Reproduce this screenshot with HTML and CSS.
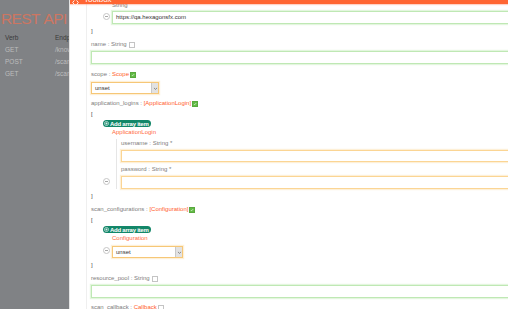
FILE: index.html
```html
<html><head>
	<meta charset="utf-8">
	<title>REST API</title>
	<link rel="stylesheet" href="styles.css">
</head>
<body>
	<!--页面背景-->
	<div class="page">
		<h1 class="title">REST API</h1>
		<div class="verbs">
			<div class="th">Verb</div><div class="th">Endpoint</div>
			<div>GET</div><div>/knowledge</div>
			<div>POST</div><div>/scans</div>
			<div>GET</div><div>/scans/{id}</div>
		</div>
	</div>

	<!--弹出层-->
	<div class="modal">
		<div class="modal-body">
			<div class="form">
				<div class="field">
					<div class="lbl">urls : <span class="t">[String]</span></div>
					<div class="brk">[</div>
					<div class="arr">
						<a href="#" class="add"><svg viewBox="0 0 10 10" width="5" height="5"><circle cx="5" cy="5" r="4.1" fill="none" stroke="#fff" stroke-width="1.2"/><path d="M5 2.7v4.6M2.7 5h4.6" stroke="#fff" stroke-width="1.2"/></svg>Add array item</a>
						<div class="item">
							<span class="rm"></span>
							<div class="item-body">
								<div class="item-title plain">String</div>
								<div class="ctl ok">https://qa.hexagonsfx.com</div>
							</div>
						</div>
					</div>
					<div class="brk">]</div>
				</div>

				<div class="field">
					<div class="lbl">name : String <span class="chk"></span></div>
					<div class="ctl ok"></div>
				</div>

				<div class="field loose">
					<div class="lbl">scope : <span class="t">Scope</span> <span class="chk on"><svg viewBox="0 0 6 6"><path d="M1.2 3l1.2 1.2 2.4-2.6" fill="none" stroke="#fff" stroke-width="0.9"/></svg></span></div>
					<div class="sel sel-scope">unset<span class="arrow"><svg viewBox="0 0 8 8" width="5" height="5"><path d="M1.5 3l2.5 2.4L6.5 3" fill="none" stroke="#555" stroke-width="1"/></svg></span></div>
				</div>

				<div class="field">
					<div class="lbl">application_logins : <span class="t">[ApplicationLogin]</span> <span class="chk on"><svg viewBox="0 0 6 6"><path d="M1.2 3l1.2 1.2 2.4-2.6" fill="none" stroke="#fff" stroke-width="0.9"/></svg></span></div>
					<div class="brk">[</div>
					<div class="arr">
						<a href="#" class="add"><svg viewBox="0 0 10 10" width="5" height="5"><circle cx="5" cy="5" r="4.1" fill="none" stroke="#fff" stroke-width="1.2"/><path d="M5 2.7v4.6M2.7 5h4.6" stroke="#fff" stroke-width="1.2"/></svg>Add array item</a>
						<div class="item">
							<span class="rm"></span>
							<div class="item-body">
								<div class="item-title">ApplicationLogin</div>
								<div class="nest">
									<div class="lbl">username : String *</div>
									<div class="ctl warn short"></div>
									<div class="lbl">password : String *</div>
									<div class="ctl warn"></div>
								</div>
							</div>
						</div>
					</div>
					<div class="brk">]</div>
				</div>

				<div class="field">
					<div class="lbl">scan_configurations : <span class="t">[Configuration]</span> <span class="chk on"><svg viewBox="0 0 6 6"><path d="M1.2 3l1.2 1.2 2.4-2.6" fill="none" stroke="#fff" stroke-width="0.9"/></svg></span></div>
					<div class="brk">[</div>
					<div class="arr">
						<a href="#" class="add"><svg viewBox="0 0 10 10" width="5" height="5"><circle cx="5" cy="5" r="4.1" fill="none" stroke="#fff" stroke-width="1.2"/><path d="M5 2.7v4.6M2.7 5h4.6" stroke="#fff" stroke-width="1.2"/></svg>Add array item</a>
						<div class="item">
							<span class="rm"></span>
							<div class="item-body">
								<div class="item-title">Configuration</div>
								<div class="sel sel-conf">unset<span class="arrow"><svg viewBox="0 0 8 8" width="5" height="5"><path d="M1.5 3l2.5 2.4L6.5 3" fill="none" stroke="#555" stroke-width="1"/></svg></span></div>
							</div>
						</div>
					</div>
					<div class="brk">]</div>
				</div>

				<div class="field">
					<div class="lbl">resource_pool : String <span class="chk"></span></div>
					<div class="ctl ok"></div>
				</div>

				<div class="field">
					<div class="lbl">scan_callback : <span class="t">Callback</span> <span class="chk"></span></div>
				</div>
			</div>
		</div>

		<div class="modal-head">
			<svg viewBox="0 0 10 10" width="7" height="7"><path d="M3.5 2L1 5l2.5 3M6.5 2L9 5 6.5 8" fill="none" stroke="#fff" stroke-width="1.3"/></svg>
			<span>Toolbox</span>
		</div>
	</div>
</body></html>
```

FILE: styles.css
```css
* {
	margin: 0;
	padding: 0;
	box-sizing: border-box;
}

html, body {
	height: 100%;
	overflow: hidden;
}

body {
	font-family: "Liberation Sans", Arial, sans-serif;
	background: #808285;
	position: relative;
}

a {
	text-decoration: none;
}

/* 背景页面 */
.page {
	padding: 9px 0 0 1px;
}

.title {
	font-size: 15.5px;
	font-weight: normal;
	line-height: 20px;
	letter-spacing: -0.6px;
	word-spacing: 1px;
	color: #cd7662;
}

.verbs {
	display: grid;
	grid-template-columns: 50px auto;
	margin-top: 3px;
	padding-left: 4px;
	font-size: 6.5px;
	line-height: 12px;
	color: #bdbdbd;
}
.verbs .th {
	color: #3a3a3a;
}

/* 弹出层 */
.modal {
	position: absolute;
	top: 0;
	bottom: 0;
	left: 69px;
	width: 620px;
	background: #fff;
	border-left: 1px solid #e4e4e4;
	overflow: hidden;
}

.modal-head {
	position: absolute;
	top: -18px;
	left: 0;
	right: 0;
	height: 22px;
	display: flex;
	align-items: flex-end;
	gap: 5px;
	padding-left: 2px;
	background: #ff6633;
	box-shadow: 0 1px 1px rgba(255, 110, 70, 0.3);
	color: #fff;
	font-size: 8px;
	line-height: 8px;
}
.modal-head svg {
	margin-bottom: -2px;
}

.modal-body {
	margin-top: -33px;
	padding-left: 16px;
}

.form {
	border-left: 1px solid #efefef;
	padding-left: 4px;
	min-height: 400px;
	font-size: 6px;
	color: #7d7d7d;
}

.field {
	margin-top: 5px;
}
.field.loose {
	margin-top: 6px;
}

.lbl {
	display: flex;
	align-items: center;
	height: 9px;
	line-height: 9px;
	white-space: pre;
}

.t {
	color: #ff5e2b;
}

.chk {
	display: inline-block;
	width: 6px;
	height: 6px;
	margin-left: 1px;
	border: 1px solid #c4c4c4;
	background: #fff;
}
.chk.on {
	border-color: #5aa83e;
	background: #62bb46;
}
.chk svg {
	display: block;
	width: 4px;
	height: 4px;
}

.brk {
	height: 8px;
	line-height: 8px;
	color: #444;
}
.lbl + .brk {
	margin-top: 2px;
}
.arr + .brk {
	margin-top: 3px;
}

/* 输入框 */
.ctl {
	width: 100%;
	height: 13px;
	margin-top: 2px;
	padding-left: 3px;
	line-height: 11px;
	color: #333;
	background: #fff;
	border: 1px solid #bfe8b4;
	box-shadow: 0 0 1px 1px rgba(200, 238, 190, 0.5);
}
.ctl.warn {
	border-color: #fbd594;
	box-shadow: 0 0 1px 1px rgba(253, 226, 176, 0.5);
}
.ctl.short {
	height: 12px;
}
.item-title + .ctl {
	margin-top: 1px;
}

/* 下拉框 */
.sel {
	display: flex;
	align-items: center;
	justify-content: space-between;
	height: 12px;
	margin-top: 3px;
	padding-left: 3px;
	color: #333;
	border: 1px solid #f6c777;
	box-shadow: 0 0 1px 1px rgba(253, 226, 176, 0.5);
}
.sel-scope {
	width: 68px;
}
.sel-conf {
	width: 71px;
}
.sel .arrow {
	display: flex;
	align-items: center;
	justify-content: center;
	width: 7px;
	height: 100%;
	background: #e2e2e2;
	border-left: 1px solid #c9c9c9;
}

/* 数组 */
.arr {
	padding-left: 12px;
}

.add {
	display: flex;
	align-items: center;
	gap: 1px;
	width: max-content;
	height: 7px;
	margin-top: 2px;
	padding: 0 2px 0 1px;
	border-radius: 4px;
	background: #138769;
	color: #fff;
	font-size: 6px;
	font-weight: bold;
	letter-spacing: -0.25px;
	white-space: nowrap;
}

.item {
	display: flex;
	align-items: flex-end;
}

.rm {
	position: relative;
	flex: none;
	width: 7px;
	height: 7px;
	margin: 0 2px 4px 0;
	border: 1px solid #c6c6c6;
	border-radius: 50%;
}
.rm::after {
	content: "";
	position: absolute;
	left: 1px;
	right: 1px;
	top: 2px;
	height: 1px;
	background: #a8a8a8;
}

.item-body {
	flex: 1;
}

.item-title {
	height: 10px;
	line-height: 10px;
	color: #ff6a3d;
}
.item-title.plain {
	color: #7d7d7d;
}

.nest {
	margin-left: 4px;
	padding-left: 4px;
	border-left: 1px solid #e6e6e6;
}
.nest .lbl {
	margin-top: 3px;
}
.nest .lbl:first-child {
	margin-top: 2px;
}
```
